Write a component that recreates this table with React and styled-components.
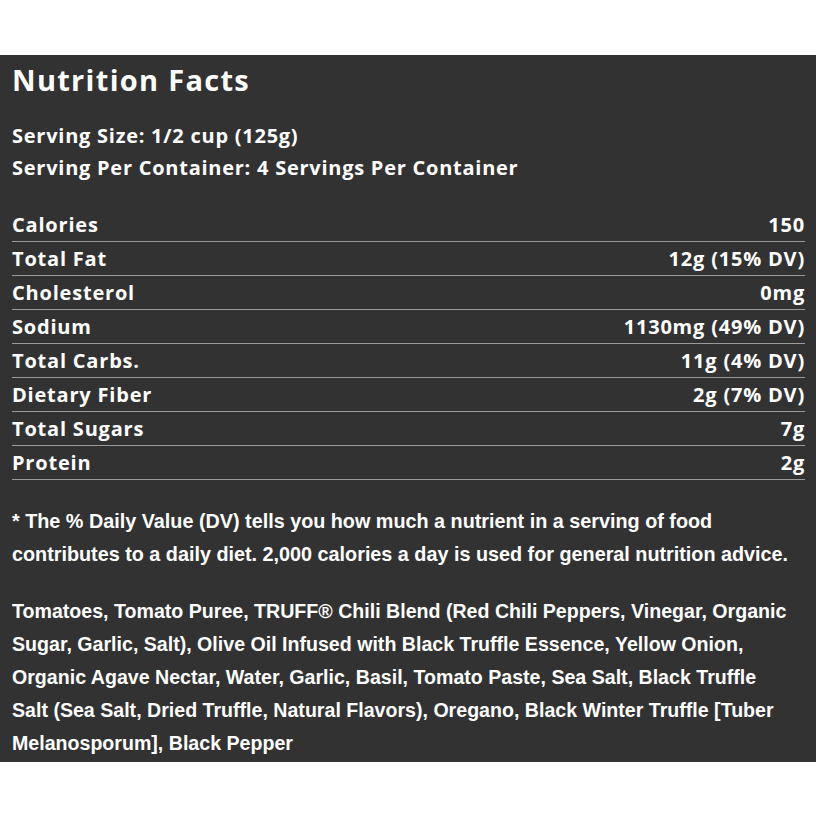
import styled, { createGlobalStyle } from "styled-components";

const GlobalStyle = createGlobalStyle`
    body {
        margin: 0;
        background: #FFF;
    }
`

const Panel = styled.section`
    margin-top: 55px;
    background: #323232;
    color: #FFF;
    padding: 8px 11px 2px 12px;
    font-family: "Open Sans", "Noto Sans", sans-serif;
`

const Title = styled.h2`
    font-size: 29px;
    font-weight: 700;
    margin: 0 0 23px;
    line-height: 34px;
    letter-spacing: 1.3px;
`

const Serving = styled.p`
    font-size: 20px;
    font-weight: 700;
    margin: 0;
    line-height: 32px;
    letter-spacing: 0.75px;
`

const Table = styled.div`
    margin-top: 24px;
    display: flex;
    flex-direction: column;
`

const Row = styled.div`
    box-sizing: border-box;
    display: flex;
    justify-content: space-between;
    align-items: center;
    height: 34px;
    font-size: 20px;
    font-weight: 700;
    letter-spacing: 0.8px;
    border-bottom: 1px solid #9a9a9a;
`

const Note = styled.p`
    font-family: "Liberation Sans", Arial, sans-serif;
    font-size: ${props => props.size || "19.8px"};
    font-weight: 700;
    line-height: 33px;
    margin: 25px 0 0;
`

const Ingredients = styled(Note)`
    margin-top: 24px;
`

const rows = [
    ["Calories", "150"],
    ["Total Fat", "12g (15% DV)"],
    ["Cholesterol", "0mg"],
    ["Sodium", "1130mg (49% DV)"],
    ["Total Carbs.", "11g (4% DV)"],
    ["Dietary Fiber", "2g (7% DV)"],
    ["Total Sugars", "7g"],
    ["Protein", "2g"],
]

const App = () => {
    return (
        <>
            <GlobalStyle />
            <Panel>
                <Title>Nutrition Facts</Title>
                <Serving>Serving Size: 1/2 cup (125g)</Serving>
                <Serving>Serving Per Container: 4 Servings Per Container</Serving>
                <Table>
                    {rows.map(([label, value]) => (
                        <Row key={label}>
                            <span>{label}</span>
                            <span>{value}</span>
                        </Row>
                    ))}
                </Table>
                <Note>
                    * The % Daily Value (DV) tells you how much a nutrient in a serving of food
                    contributes to a daily diet. 2,000 calories a day is used for general nutrition advice.
                </Note>
                <Ingredients size="19.6px">
                    Tomatoes, Tomato Puree, TRUFF® Chili Blend (Red Chili Peppers, Vinegar, Organic<br />
                    Sugar, Garlic, Salt), Olive Oil Infused with Black Truffle Essence, Yellow Onion,<br />
                    Organic Agave Nectar, Water, Garlic, Basil, Tomato Paste, Sea Salt, Black Truffle<br />
                    Salt (Sea Salt, Dried Truffle, Natural Flavors), Oregano, Black Winter Truffle [Tuber<br />
                    Melanosporum], Black Pepper
                </Ingredients>
            </Panel>
        </>
    )
}

export default App;
